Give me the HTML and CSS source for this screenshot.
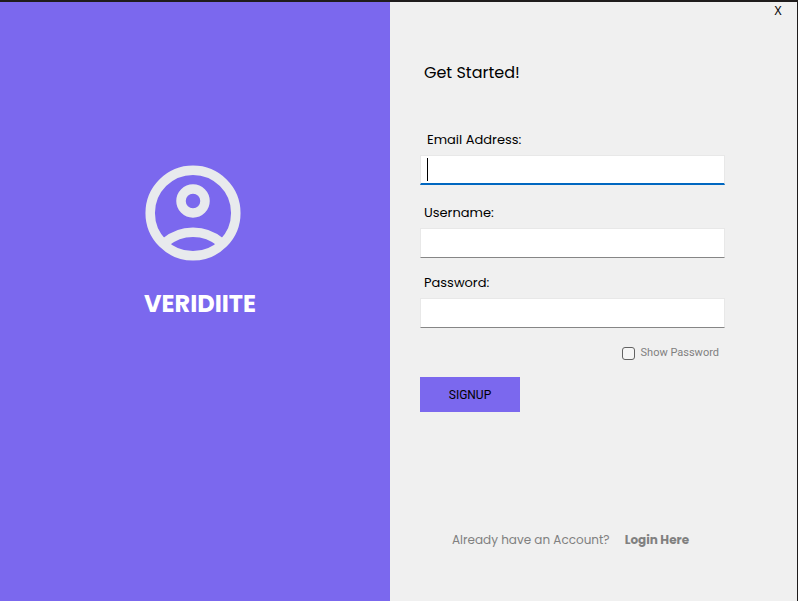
FILE: index.html
```html
<!DOCTYPE html>
<html lang="en">
<head>
<meta charset="utf-8">
<meta name="viewport" content="width=device-width, initial-scale=1">
<title>Veridiite</title>
<link rel="stylesheet" href="styles.css">
</head>
<body>
<main class="window">
  <section class="brand">
    <svg class="brand-icon" viewBox="0 0 96 96" fill="none" stroke="currentColor" stroke-width="9.5" aria-hidden="true">
      <circle cx="48" cy="48" r="42.8"/>
      <circle cx="48" cy="36" r="12"/>
      <path d="M20 77.500A43 43 0 0 1 76 77.500"/>
    </svg>
    <h1 class="brand-name">VERIDIITE</h1>
  </section>
  <section class="panel">
    <button class="close" type="button">X</button>
    <form class="form">
      <h2 class="title">Get Started!</h2>
      <div class="field field-active">
        <label for="email">Email Address:</label>
        <div class="entry"><input id="email" type="text"></div>
      </div>
      <div class="field">
        <label for="username">Username:</label>
        <div class="entry"><input id="username" type="text"></div>
      </div>
      <div class="field">
        <label for="password">Password:</label>
        <div class="entry"><input id="password" type="password"></div>
      </div>
      <div class="show">
        <input id="show" type="checkbox">
        <label for="show">Show Password</label>
      </div>
      <button class="signup" type="submit">SIGNUP</button>
    </form>
    <p class="login"><span>Already have an Account?</span><a href="#login">Login Here</a></p>
  </section>
</main>
</body>
</html>
```
FILE: styles.css
```css
* {
  box-sizing: border-box;
}

body {
  margin: 0;
  font-family: Poppins, Inter, sans-serif;
  font-size: 13px;
  line-height: 20px;
  color: #000;
}

.window {
  display: grid;
  grid-template-columns: 390fr 407fr;
  min-height: 100vh;
  border-top: 2px solid #1f1c1c;
  border-right: 1px solid #1f1c1c;
}

.brand {
  display: flex;
  flex-direction: column;
  align-items: center;
  gap: 25px;
  padding: 163px 0 0;
  background: #7b68ee;
}

.brand-icon {
  width: 96px;
  height: 96px;
  margin-right: 4px;
  color: #e8eaed;
}

.brand-name {
  margin: 0 0 0 10px;
  font-size: 24px;
  line-height: 36px;
  font-weight: 700;
  color: #fff;
}

.panel {
  display: flex;
  flex-direction: column;
  padding-left: 30px;
  background: #f0f0f0;
}

.close {
  align-self: flex-end;
  width: 38px;
  height: 18px;
  padding: 0;
  border: 0;
  background: none;
  font: 12px/18px "Noto Sans", sans-serif;
  color: #000;
}

.form {
  display: flex;
  flex-direction: column;
  width: 305px;
  max-width: 100%;
  padding-top: 41px;
}

.title {
  margin: 0 0 45px 4px;
  font-size: 16px;
  line-height: 24px;
  font-weight: 400;
}

.field {
  display: flex;
  flex-direction: column;
  gap: 5px;
  margin-bottom: 15px;
}

.field label {
  padding-left: 4px;
}

.field-active {
  margin-bottom: 18px;
}

.field-active label {
  padding-left: 7px;
}

.entry {
  position: relative;
  height: 30px;
}

.entry input {
  display: block;
  width: 100%;
  height: 100%;
  padding: 0 7px;
  border: 1px solid #e8e8e8;
  border-bottom-color: #868686;
  border-radius: 0;
  outline: 0;
  background: #fff;
  font: inherit;
}

.field-active .entry input {
  border-bottom: 2px solid #0067c0;
}

/* text cursor of the active field */
.field-active .entry::after {
  content: "";
  position: absolute;
  top: 3px;
  left: 7px;
  width: 1px;
  height: 23px;
  background: #000;
}

.show {
  display: flex;
  align-items: center;
  justify-content: flex-end;
  gap: 6px;
  margin: 0 6px 14px 0;
  font-family: Roboto, sans-serif;
  font-size: 11px;
  color: #808080;
}

.show input {
  appearance: none;
  width: 13px;
  height: 13px;
  margin: 0;
  border: 1px solid #626262;
  border-radius: 3px;
  background: #f5f5f5;
}

.signup {
  width: 100px;
  height: 35px;
  padding: 0;
  border: 0;
  background: #7b68ee;
  font: 12px/20px Roboto, sans-serif;
  color: #000;
}

.login {
  display: flex;
  gap: 15px;
  margin: 118px 0 0 32px;
  font-size: 12px;
  color: #808080;
}

.login a {
  font-weight: 700;
  color: inherit;
  text-decoration: none;
}
```
